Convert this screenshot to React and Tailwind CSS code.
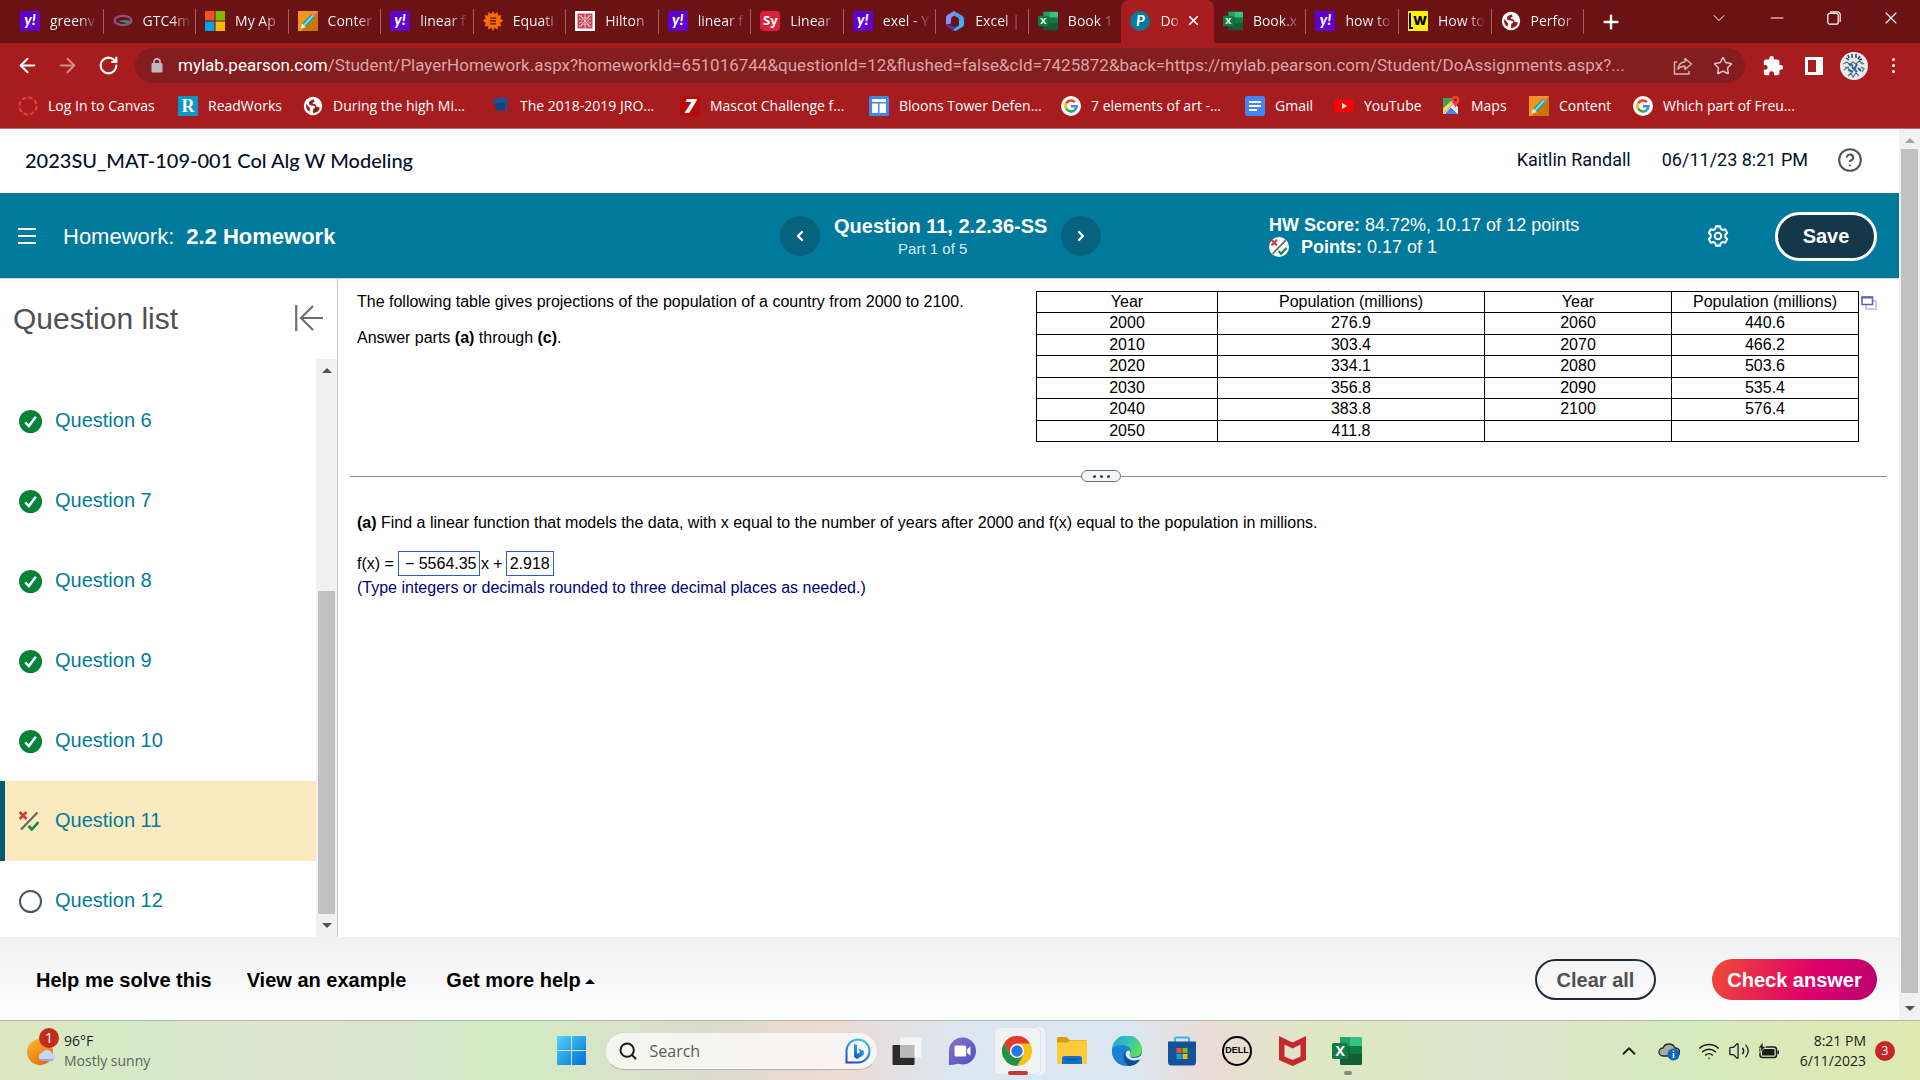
import {
  ArrowLeft,
  ArrowRight,
  ChevronDown,
  ChevronLeft,
  ChevronRight,
  ChevronUp,
  CircleHelp,
  Minus,
  Plus,
  RotateCw,
  Search,
  Star,
  Volume2,
  Wifi,
  X,
} from "lucide-react";
import clsx from "clsx";
import { useState } from "react";

const tabs = [
  { icon: "yahoo", title: "greenv" },
  { icon: "gtc", title: "GTC4m" },
  { icon: "microsoft", title: "My Ap" },
  { icon: "pencil", title: "Conter" },
  { icon: "yahoo", title: "linear f" },
  { icon: "sun", title: "Equati" },
  { icon: "hilton", title: "Hilton" },
  { icon: "yahoo", title: "linear f" },
  { icon: "symbolab", title: "Linear" },
  { icon: "yahoo", title: "exel - Y" },
  { icon: "m365", title: "Excel |" },
  { icon: "excel", title: "Book 1" },
  { icon: "pearson", title: "Do", active: true },
  { icon: "excel", title: "Book.x" },
  { icon: "yahoo", title: "how to" },
  { icon: "wise", title: "How to" },
  { icon: "globe", title: "Perfor" },
];

const bookmarks = [
  { icon: "canvas", title: "Log In to Canvas", width: "w-[160px]" },
  { icon: "readworks", title: "ReadWorks", width: "w-[125px]" },
  { icon: "globe", title: "During the high Mi...", width: "w-[187px]" },
  { icon: "cap", title: "The 2018-2019 JRO...", width: "w-[190px]" },
  { icon: "seven", title: "Mascot Challenge f...", width: "w-[189px]" },
  { icon: "sites", title: "Bloons Tower Defen...", width: "w-[192px]" },
  { icon: "google", title: "7 elements of art -...", width: "w-[184px]" },
  { icon: "docs", title: "Gmail", width: "w-[89px]" },
  { icon: "youtube", title: "YouTube", width: "w-[107px]" },
  { icon: "maps", title: "Maps", width: "w-[88px]" },
  { icon: "pencil", title: "Content", width: "w-[104px]" },
  { icon: "google", title: "Which part of Freu...", width: "w-[170px]" },
];

const questions = [
  { id: 6, status: "correct" },
  { id: 7, status: "correct" },
  { id: 8, status: "correct" },
  { id: 9, status: "correct" },
  { id: 10, status: "correct" },
  { id: 11, status: "partial" },
  { id: 12, status: "open" },
];

const rows = [
  ["2000", "276.9", "2060", "440.6"],
  ["2010", "303.4", "2070", "466.2"],
  ["2020", "334.1", "2080", "503.6"],
  ["2030", "356.8", "2090", "535.4"],
  ["2040", "383.8", "2100", "576.4"],
  ["2050", "411.8", "", ""],
];

export default function App() {
  return (
    <div className="flex h-screen flex-col overflow-hidden bg-white font-['Liberation_Sans',Arial,sans-serif] text-black">
      <Browser />
      <div className="flex min-h-0 flex-1">
        <div className="flex min-w-0 flex-1 flex-col">
          <CourseHeader />
          <HomeworkBar />
          <div className="flex min-h-0 flex-1">
            <QuestionList />
            <Exercise />
          </div>
          <Footer />
        </div>
        <Scrollbar muted thumb="mb-[27px] mt-5" />
      </div>
      <Taskbar />
    </div>
  );
}

function Browser() {
  return (
    <header className="shrink-0 border-b border-[#c56a6a] bg-[#a71d1f] font-['Open_Sans','Noto_Sans',sans-serif] text-white">
      <div className="flex h-[43px] bg-[#6b1214] pl-[11px]">
        <div className="flex w-[1573px] min-w-0">
          {tabs.map((tab, i) => (
            <Tab key={i} {...tab} divider={!tab.active && !tabs[i + 1]?.active} />
          ))}
        </div>
        <button aria-label="New tab" className="ml-4 mr-auto">
          <Plus className="h-[22px] w-[22px]" strokeWidth={2.6} />
        </button>
        <div className="flex items-start pt-2">
          <button aria-label="Search tabs" className="flex h-5 w-[58px] items-center justify-center">
            <ChevronDown className="h-5 w-5" strokeWidth={1.2} />
          </button>
          <button aria-label="Minimize" className="flex h-5 w-[57px] items-center justify-center">
            <Minus className="h-5 w-5" strokeWidth={1.4} />
          </button>
          <button aria-label="Restore" className="flex h-5 w-[57px] items-center justify-center">
            <svg viewBox="0 0 14 14" className="h-3.5 w-3.5" fill="none" stroke="currentColor" strokeWidth="1.2">
              <rect x="0.8" y="2.4" width="10.4" height="10.8" rx="2" />
              <path d="M3 .8h7.4a2.8 2.8 0 0 1 2.8 2.8V11" />
            </svg>
          </button>
          <button aria-label="Close" className="flex h-5 w-[58px] items-center justify-center">
            <X className="h-5 w-5" strokeWidth={1.3} />
          </button>
        </div>
      </div>

      <div className="flex h-[45px] items-center pl-4 pr-6">
        <button aria-label="Back" className="w-10">
          <ArrowLeft className="h-[23px] w-[23px]" strokeWidth={2.2} />
        </button>
        <button aria-label="Forward" className="w-10 text-[#d48e8f]">
          <ArrowRight className="h-[23px] w-[23px]" strokeWidth={2} />
        </button>
        <button aria-label="Reload" className="w-[39px] pl-0.5">
          <RotateCw className="h-[21px] w-[21px]" strokeWidth={2.4} />
        </button>
        <div className="flex h-[35px] min-w-0 flex-1 items-center rounded-full bg-[#841d1f] pl-4 pr-3">
          <svg viewBox="0 0 12 15" className="mr-[15px] h-[15px] w-3 shrink-0" fill="none">
            <rect x="0.5" y="5" width="11" height="9.6" rx="1.2" fill="#bfb9ba" />
            <path d="M3 6V3.8a3 3 0 0 1 6 0V6" stroke="#bfb9ba" strokeWidth="1.7" />
          </svg>
          <div className="min-w-0 flex-1 overflow-hidden whitespace-nowrap font-['Roboto',sans-serif] text-[17px] text-[#d9a5a6]">
            <span className="text-white">mylab.pearson.com</span>
            /Student/PlayerHomework.aspx?homeworkId=651016744&amp;questionId=12&amp;flushed=false&amp;cId=7425872&amp;back=https://mylab.pearson.com/Student/DoAssignments.aspx?...
          </div>
          <button aria-label="Share" className="ml-4">
            <svg viewBox="0 0 20 20" className="h-5 w-5" fill="none" stroke="#d3b5b5" strokeWidth="1.5" strokeLinejoin="round">
              <path d="M4 6H1.5v12H16v-3" />
              <path d="M12 2.5 18.5 8 12 13.5v-3.3c-3.500-.2-5.500.8-7 3 .3-4 2.500-7 7-7.500z" />
            </svg>
          </button>
          <button aria-label="Bookmark this page" className="ml-5">
            <Star className="h-5 w-5 text-[#dcc3c3]" strokeWidth={1.8} />
          </button>
        </div>
        <div className="flex items-center pl-[17px]">
          <button aria-label="Extensions" className="mr-[21px]">
            <svg viewBox="0 0 24 24" className="h-[22px] w-[22px]" fill="white">
              <path d="M20.500 11H19V7a2 2 0 0 0-2-2h-4V3.500a2.500 2.500 0 0 0-5 0V5H4a2 2 0 0 0-2 2v3.800h1.500a2.700 2.700 0 0 1 0 5.400H2V20a2 2 0 0 0 2 2h3.800v-1.500a2.700 2.700 0 0 1 5.400 0V22H17a2 2 0 0 0 2-2v-4h1.500a2.500 2.500 0 0 0 0-5z" />
            </svg>
          </button>
          <button aria-label="Side panel" className="mr-[17px] flex h-[18px] w-[18px] justify-end border-[3px] border-white">
            <span className="h-full w-1 bg-white" />
          </button>
          <button aria-label="Profile" className="mr-[22px]">
            <Avatar />
          </button>
          <button aria-label="Menu" className="flex w-1.5 flex-col items-center gap-[3px]">
            <span className="h-[3px] w-[3px] rounded-full bg-white" />
            <span className="h-[3px] w-[3px] rounded-full bg-white" />
            <span className="h-[3px] w-[3px] rounded-full bg-white" />
          </button>
        </div>
      </div>

      <nav className="flex h-10 items-center pb-1 pl-[18px]">
        {bookmarks.map((item, i) => (
          <a key={i} href="#" className={clsx("flex shrink-0 items-center gap-2.5 whitespace-nowrap text-sm", item.width)}>
            <SiteIcon name={item.icon} />
            {item.title}
          </a>
        ))}
      </nav>
    </header>
  );
}

function Tab({ icon, title, active, divider }) {
  return (
    <div
      className={clsx(
        "relative flex min-w-0 flex-1 items-center pb-0.5 pl-[9px]",
        active && "rounded-t-lg bg-[#a71d1f]",
      )}
    >
      <SiteIcon name={icon} />
      <button
        className={clsx(
          "ml-2.5 whitespace-nowrap bg-gradient-to-r from-white from-60% to-transparent bg-clip-text text-left text-sm text-transparent",
          active ? "w-5" : "w-12",
        )}
      >
        {title}
      </button>
      {active && (
        <button aria-label="Close tab" className="ml-1.5">
          <X className="h-[15px] w-[15px]" strokeWidth={2.8} />
        </button>
      )}
      {divider && <span className="absolute right-0 top-[9px] h-[25px] w-px bg-[#a06060]" />}
    </div>
  );
}

function Avatar() {
  return (
    <svg viewBox="0 0 28 28" className="h-7 w-7">
      <circle cx="14" cy="14" r="14" fill="#e8edef" />
      <path d="M8 3l1 3M12 2v4M16 2v4M20 4l-2 3M6 6l3 2M22 7l-3 1" stroke="#33424c" strokeWidth="1.500" />
      <path d="M3 12l4-2 3 3 3-3 3 2 3-3 5 3M4 18l4-3 1 4M21 15l3 2-2 3M8 24l3-3 2 4 3-4 3 3" fill="none" stroke="#5c7080" strokeWidth="1.200" />
      <path d="M9 12l4 2M12 15l5 5M17 12l-3 6M9 18l4 2M18 16l3 3" stroke="#2c5f9a" strokeWidth="2" />
      <path d="M20 10l3 2M5 15l2 1" stroke="#6d9a3b" strokeWidth="1.600" />
    </svg>
  );
}

function SiteIcon({ name }) {
  switch (name) {
    case "yahoo":
      return (
        <span className="flex h-5 w-5 shrink-0 items-center justify-center bg-[#5f01d1] pb-0.5 font-['Lato',sans-serif] text-[15px] font-black italic leading-none text-white">
          y!
        </span>
      );
    case "symbolab":
      return (
        <span className="flex h-5 w-5 shrink-0 items-center justify-center rounded-sm bg-[#db1f3d] text-[13px] font-bold leading-none text-white">
          Sy
        </span>
      );
    case "readworks":
      return (
        <span className="flex h-5 w-5 shrink-0 items-center justify-center bg-[#0e96c4] font-['Liberation_Serif',serif] text-lg font-bold leading-none text-white">
          R
        </span>
      );
    case "seven":
      return (
        <span className="flex h-5 w-5 shrink-0 items-center justify-center bg-[#b50a0e] text-xl font-black italic leading-none text-white">
          7
        </span>
      );
    case "wise":
      return (
        <span className="flex h-5 w-5 shrink-0 items-center justify-center bg-[#fff200] text-[13px] font-black leading-none text-black">
          <span className="h-4 w-1 border-b-2 border-l-2 border-black" />W
        </span>
      );
    case "pearson":
      return (
        <span className="flex h-5 w-5 shrink-0 items-center justify-center rounded-full bg-[#047a9c] font-['Lato',sans-serif] text-[15px] font-bold italic leading-none text-white">
          P
        </span>
      );
    case "microsoft":
      return (
        <svg viewBox="0 0 20 20" className="h-5 w-5 shrink-0">
          <path fill="#f25022" d="M0 0h9.500v9.500H0z" />
          <path fill="#7fba00" d="M10.500 0H20v9.500h-9.500z" />
          <path fill="#00a4ef" d="M0 10.500h9.500V20H0z" />
          <path fill="#ffb900" d="M10.500 10.500H20V20h-9.500z" />
        </svg>
      );
    case "pencil":
      return (
        <svg viewBox="0 0 20 20" className="h-5 w-5 shrink-0">
          <path fill="#f5941d" d="M0 0h20v20H0z" />
          <path fill="#c97605" d="M20 0v20H3z" />
          <path fill="#2fa39a" d="M4 12.500 13 3l4 3.600-9 9.600z" />
          <path fill="#8fe0d8" d="M5.500 13.500 14.500 4l1.200 1.100-9 9.700z" />
          <path fill="#f3e7c4" d="M4 12.500 2.500 17.500 8 16.200z" />
          <path fill="#e56aa0" d="m13 3 1.500-1.200L18.200 5 17 6.600z" />
        </svg>
      );
    case "gtc":
      return (
        <svg viewBox="0 0 20 20" className="h-5 w-5 shrink-0" fill="none">
          <ellipse cx="10" cy="9.500" rx="8.500" ry="4.600" stroke="#8d4a90" strokeWidth="2.400" />
          <path d="M6 10.500c3-2 8-2 12 0-1 3-5 4.500-9 3.500 3-.2 4-.8 4.500-1.800-3-.7-5-1-7.500-1.700z" fill="#3f8a52" />
        </svg>
      );
    case "sun":
      return (
        <svg viewBox="0 0 20 20" className="h-5 w-5 shrink-0">
          <path fill="#f96a0c" d="m10 0 1.700 3L14.500 1l.5 3.400 3.400-.2-.9 3.200L20 9.800 17.200 12l1.200 3.300-3.400-.1-.5 3.500-2.800-1.900L10 20l-1.700-3.200-2.800 1.900-.5-3.500-3.400.1L2.800 12 0 9.800l2.500-2.400-.9-3.200 3.400.2L5.500 1l2.800 2z" />
          <path d="M7 7.200h6M7 10h6M7 12.800h6" stroke="#5e1c0c" strokeWidth="1.300" />
        </svg>
      );
    case "hilton":
      return (
        <svg viewBox="0 0 20 20" className="h-5 w-5 shrink-0" fill="none">
          <path fill="#fff" d="M0 0h20v20H0z" />
          <path fill="#c8485a" d="M2.500 2.500h15v15h-15z" />
          <path d="m4 4 12 12M16 4 4 16M10 3v14M4 8c4 0 4 4 0 4M16 8c-4 0-4 4 0 4M6 4c0 4 8 4 8 0M6 16c0-4 8-4 8 0" stroke="#f4d6d9" strokeWidth=".8" />
        </svg>
      );
    case "m365":
      return (
        <svg viewBox="0 0 20 20" className="h-5 w-5 shrink-0">
          <path fill="#8f8cf0" d="M9 0 3 3.500C1.500 4.400 1 5.500 1 7v6.500l5-1V8c0-1 .4-1.700 1.300-2.200L12 3z" />
          <path fill="#4e9bf2" d="m9 0 7.500 4.200C18 5 19 6 19 8v4l-5 1V9c0-1.300-.5-2-1.500-2.600L8 4z" />
          <path fill="#5136ae" d="M1 13c0 1.500.7 2.500 2 3.200L9 20l3-1.500 1-4.500-3 1.500c-1 .5-2 .3-3-.4z" />
          <path fill="#3fb4e8" d="M19 10v3c0 1.500-.7 2.500-2 3.300L10.500 20 8 19l6-4.500V10z" />
        </svg>
      );
    case "excel":
      return <ExcelIcon className="h-5 w-5 text-[9px]" />;
    case "globe":
      return (
        <svg viewBox="0 0 20 20" className="h-5 w-5 shrink-0">
          <circle cx="10" cy="10" r="9.200" fill="#fff" />
          <path fill="#8f1b1d" d="M11 3.500c-3 .2-5 1.700-5 3.700 0 2.500 3.500 2 5.500 2.900 1.500.7.500 2.400-1.200 2.500L10 17c3.500 0 6.500-2.300 6.700-5.500l-3.200-.8c0-1.700-1.500-2.600-3.300-2.900C9 7.500 9.500 6 11.500 6z" />
          <path fill="#8f1b1d" d="m3 8 4 4.200-.4 3.600C4 14.500 2.700 11.500 3 8z" />
        </svg>
      );
    case "canvas":
      return (
        <svg viewBox="0 0 20 20" className="h-5 w-5 shrink-0">
          <circle cx="10" cy="10" r="8.600" fill="none" stroke="#ea3b2f" strokeWidth="2.200" strokeDasharray="4.700 2.050" />
        </svg>
      );
    case "cap":
      return (
        <svg viewBox="0 0 20 20" className="h-5 w-5 shrink-0">
          <path fill="#15549a" d="m1 4 13-3 5 3.500L7 8z" />
          <path fill="#0f4686" d="m5 8 10-2v6c-2 3-7 4-9 2z" />
          <path d="M16 5v12" stroke="#15549a" strokeWidth="2" />
        </svg>
      );
    case "sites":
      return (
        <svg viewBox="0 0 20 20" className="h-5 w-5 shrink-0">
          <rect width="20" height="20" rx="1.500" fill="#4285f4" />
          <path fill="#fff" d="M3 3h14v3H3zM3 7.500h6V17H3zM10.500 7.500H17V17h-6.500z" />
        </svg>
      );
    case "google":
      return (
        <svg viewBox="0 0 20 20" className="h-5 w-5 shrink-0" fill="none" strokeWidth="2.600">
          <circle cx="10" cy="10" r="10" fill="#fff" />
          <path d="M13.900 6.100A5.500 5.500 0 0 0 5.200 7.300" stroke="#ea4335" />
          <path d="M5.200 7.300a5.500 5.500 0 0 0 0 5.400" stroke="#fbbc05" />
          <path d="M5.200 12.700a5.500 5.500 0 0 0 8.300 1.500" stroke="#34a853" />
          <path d="M13.500 14.200A5.500 5.500 0 0 0 15.500 10.200H10" stroke="#4285f4" />
        </svg>
      );
    case "docs":
      return (
        <svg viewBox="0 0 20 20" className="h-5 w-5 shrink-0">
          <rect width="20" height="20" rx="2" fill="#4285f4" />
          <path d="M4 6h12M4 10h12M4 14h8" stroke="#fff" strokeWidth="2" />
        </svg>
      );
    case "youtube":
      return (
        <svg viewBox="0 0 20 20" className="h-5 w-5 shrink-0">
          <rect x="0.500" y="3.500" width="19" height="13" rx="3.500" fill="#f00" />
          <path fill="#fff" d="m8 7 5 3-5 3z" />
        </svg>
      );
    case "maps":
      return (
        <svg viewBox="0 0 20 20" className="h-5 w-5 shrink-0">
          <path fill="#34a853" d="M2 2h10L2 13z" />
          <path fill="#fbd75b" d="M2 12.500 12 3l2.500 2L2 18z" />
          <path fill="#e9ebee" d="M2 18 13 7l4 4v7z" />
          <path fill="#4285f4" d="m10 11 7 7H4z" />
          <path d="m10 10.500 7 7" stroke="#fff" strokeWidth="1.200" />
          <path fill="#ea4335" d="M14.500 0A4 4 0 0 0 10.500 4c0 3 3 4 4 8 1-4 4-5 4-8a4 4 0 0 0-4-4z" />
          <circle cx="14.500" cy="4" r="1.400" fill="#8e1b14" />
        </svg>
      );
    default:
      return null;
  }
}

function ExcelIcon({ className }) {
  return (
    <span className={clsx("grid shrink-0 place-items-center font-bold leading-none text-white", className)}>
      <svg viewBox="0 0 30 30" className="col-start-1 row-start-1 h-full w-full">
        <path fill="#21a366" d="M8 1h11v9H8z" />
        <path fill="#33c481" d="M18 1h10.500q1.500 0 1.500 1.500V10H18z" />
        <path fill="#107c41" d="M18 10h12v8H18z" />
        <path fill="#0e6e3a" d="M8 10h10v8H8z" />
        <path fill="#185c37" d="M8 18h22v9.500q0 1.500-1.500 1.500H9.500Q8 29 8 27.500z" />
        <rect y="7" width="16" height="16" rx="1.500" fill="#107c41" />
      </svg>
      <span className="col-start-1 row-start-1 w-[54%] justify-self-start text-center">X</span>
    </span>
  );
}

function CourseHeader() {
  return (
    <div className="flex h-16 shrink-0 items-center justify-between pb-0.5 pl-[25px] pr-9 text-[#05112a]">
      <h1 className="font-['Lato',sans-serif] text-xl font-medium">2023SU_MAT-109-001 Col Alg W Modeling</h1>
      <div className="flex items-center font-['Roboto',sans-serif] text-lg">
        <span className="mr-[31px]">Kaitlin Randall</span>
        <span className="mr-[29px]">06/11/23 8:21 PM</span>
        <button aria-label="Help">
          <CircleHelp className="h-[26px] w-[26px] text-[#4f5659]" strokeWidth={1.9} />
        </button>
      </div>
    </div>
  );
}

function HomeworkBar() {
  return (
    <div className="grid h-[86px] shrink-0 grid-cols-[780fr_489fr_438fr_192fr] items-center border-b border-[#c9d6de] bg-[#007a9c] pt-px text-white">
      <div className="flex items-center pl-[18px]">
        <button aria-label="Open menu" className="mr-[27px] flex w-[18px] flex-col gap-[5px]">
          <span className="h-0.5 bg-white" />
          <span className="h-0.5 bg-white" />
          <span className="h-0.5 bg-white" />
        </button>
        <h2 className="text-[22px]">
          Homework:<strong className="ml-3">2.2 Homework</strong>
        </h2>
      </div>
      <div className="flex items-center gap-3.5">
        <RoundButton label="Previous question" icon={ChevronLeft} />
        <div className="text-center">
          <p className="text-xl font-bold leading-6">Question 11, 2.2.36-SS</p>
          <p className="pr-4 text-[15px] leading-[21px] text-[#d9edf3]">Part 1 of 5</p>
        </div>
        <RoundButton label="Next question" icon={ChevronRight} />
      </div>
      <div className="text-lg leading-[22px]">
        <p>
          <strong>HW Score:</strong> 84.72%, 10.17 of 12 points
        </p>
        <p className="flex items-center">
          <span className="mr-3 flex h-5 w-5 items-center justify-center rounded-full bg-white">
            <PartialIcon className="h-4 w-4" />
          </span>
          <strong className="mr-[5px]">Points:</strong> 0.17 of 1
        </p>
      </div>
      <div className="flex items-center justify-between pr-[22px]">
        <button aria-label="Settings">
          <GearIcon />
        </button>
        <button className="h-[49px] w-[102px] rounded-full border-[3px] border-white bg-[#14374a] text-xl font-bold">
          Save
        </button>
      </div>
    </div>
  );
}

function RoundButton({ label, icon: Icon }) {
  return (
    <button aria-label={label} className="flex h-10 w-10 shrink-0 items-center justify-center rounded-full bg-[#07627f]">
      <Icon className="h-4 w-4" strokeWidth={3.4} />
    </button>
  );
}

function GearIcon() {
  return (
    <svg viewBox="0 0 24 24" className="h-6 w-[22px]" fill="none" stroke="white" strokeWidth="2.200" strokeLinejoin="round">
      <path d="M9.800 1.500h4.400l.8 2.800 1.900 1.100 2.900-.7 2.200 3.800-2 2.100v2.800l2 2.100-2.200 3.800-2.900-.7-1.900 1.100-.8 2.800H9.800L9 19.700l-1.900-1.100-2.900.7L2 15.500l2-2.100v-2.800L2 8.500l2.200-3.800 2.900.7L9 4.300z" />
      <circle cx="12" cy="12" r="3.600" />
    </svg>
  );
}

function PartialIcon({ className }) {
  return (
    <svg viewBox="0 0 20 20" className={className} fill="none">
      <path d="m.5 1 7 7M7.500 1l-7 7" stroke="#cf3b3b" strokeWidth="2.600" />
      <path d="M18.500 1.500 2 18.500" stroke="#6a6a62" strokeWidth="2.200" />
      <path d="m9.500 15 3.200 3.500L19.500 11" stroke="#128a3e" strokeWidth="2.600" />
    </svg>
  );
}

function StatusIcon({ status }) {
  if (status === "partial") {
    return <PartialIcon className="mr-[3px] h-5 w-5" />;
  }
  if (status === "open") {
    return <span className="h-[23px] w-[23px] rounded-full border-2 border-[#4a5566]" />;
  }
  return (
    <svg viewBox="0 0 24 24" className="h-[23px] w-[23px]">
      <circle cx="12" cy="12" r="12" fill="#038238" />
      <path d="m6.500 12.800 3.800 4L17.500 7" fill="none" stroke="#fff" strokeWidth="2.600" />
    </svg>
  );
}

function QuestionList() {
  const [current, setCurrent] = useState(11);

  return (
    <aside className="flex w-[338px] shrink-0 flex-col border-r border-[#c7c9d6]">
      <div className="flex h-20 shrink-0 items-center justify-between pb-0.5 pl-[13px] pr-3.5">
        <h2 className="text-[30px] text-[#4d5054]">Question list</h2>
        <button aria-label="Collapse question list">
          <svg viewBox="0 0 28 26" className="h-[26px] w-7" fill="none" stroke="#6a7070" strokeWidth="2.200">
            <path d="M1.200 0v26M28 13H6M18 1 6 13l12 12" />
          </svg>
        </button>
      </div>
      <div className="flex min-h-0 flex-1">
        <ul className="min-w-0 flex-1 overflow-hidden pt-[22px]">
          {questions.map(({ id, status }) => (
            <li key={id}>
              <button
                onClick={() => setCurrent(id)}
                className={clsx(
                  "flex h-20 w-full items-center gap-[13px] border-l-[5px] pl-3.5 text-xl text-[#047a9c]",
                  id === current ? "border-[#005a70] bg-[#f9ebbf]" : "border-transparent",
                )}
              >
                <StatusIcon status={status} />
                <span className="pb-0.5">Question {id}</span>
              </button>
            </li>
          ))}
        </ul>
        <Scrollbar thumb="mb-[23px] mt-[232px]" />
      </div>
    </aside>
  );
}

function Scrollbar({ muted, thumb }) {
  return (
    <div className="relative flex w-[21px] shrink-0 bg-[#f1f1f1] px-0.5">
      <span
        className={clsx(
          "absolute left-1.5 top-[9px] border-x-[5px] border-b-[5px] border-x-transparent",
          muted ? "border-b-[#a3a3a3]" : "border-b-[#505050]",
        )}
      />
      <div className={clsx("w-full bg-[#c1c1c1]", thumb)} />
      <span className="absolute bottom-[9px] left-1.5 border-x-[5px] border-t-[5px] border-x-transparent border-t-[#505050]" />
    </div>
  );
}

function Exercise() {
  const [slope, setSlope] = useState("− 5564.35");
  const [intercept, setIntercept] = useState("2.918");

  return (
    <main className="min-w-0 flex-1 px-3 text-base">
      <div className="flex items-start pl-[7px] pt-3">
        <div className="min-w-0 flex-1 pt-px">
          <p className="leading-5">The following table gives projections of the population of a country from 2000 to 2100.</p>
          <p className="mt-4 leading-5">
            Answer parts <strong>(a)</strong> through <strong>(c)</strong>.
          </p>
        </div>
        <table className="h-[151px] w-[823px] table-fixed border-collapse text-center leading-5">
          <thead>
            <tr>
              <th className="w-[181px] border border-black p-0 font-normal">Year</th>
              <th className="w-[267px] border border-black p-0 font-normal">Population (millions)</th>
              <th className="w-[187px] border border-black p-0 font-normal">Year</th>
              <th className="border border-black p-0 font-normal">Population (millions)</th>
            </tr>
          </thead>
          <tbody>
            {rows.map((row) => (
              <tr key={row[0]}>
                {row.map((cell, i) => (
                  <td key={i} className="border border-black p-0">
                    {cell}
                  </td>
                ))}
              </tr>
            ))}
          </tbody>
        </table>
        <button aria-label="Open table in a new window" className="ml-0.5 mr-2.5 mt-[5px]">
          <svg viewBox="0 0 16 14" className="h-3.5 w-4" fill="none">
            <rect x="5" y="5" width="10" height="8" fill="#fff" stroke="#b9bbe0" strokeWidth="1.500" />
            <rect x="1" y="1" width="10.500" height="7.500" fill="#fff" stroke="#5a62b4" strokeWidth="1.500" />
            <path d="M.5 1.500h11.500" stroke="#5a62b4" strokeWidth="2" />
          </svg>
        </button>
      </div>

      <div className="mt-7 flex items-center">
        <span className="h-px flex-[731] bg-[#868e9c]" />
        <button
          aria-label="Resize panels"
          className="flex h-3 w-10 items-center justify-center gap-1 rounded-md border border-[#6a7786] bg-[#f4f5f6]"
        >
          <span className="h-[3px] w-[3px] rounded-full bg-[#33404e]" />
          <span className="h-[3px] w-[3px] rounded-full bg-[#33404e]" />
          <span className="h-[3px] w-[3px] rounded-full bg-[#33404e]" />
        </button>
        <span className="h-px flex-[765] bg-[#868e9c]" />
      </div>

      <div className="pl-[7px] pt-[31px]">
        <p className="leading-5">
          <strong>(a)</strong> Find a linear function that models the data, with x equal to the number of years after 2000 and f(x) equal to the population in millions.
        </p>
        <div className="mt-[18px] flex items-center">
          <label htmlFor="slope">f(x) =</label>
          <input
            id="slope"
            value={slope}
            onChange={(event) => setSlope(event.target.value)}
            className="ml-1 h-[25px] w-[82px] border border-[#2b5fc4] pl-1.5"
          />
          <label htmlFor="intercept" className="px-px">
            x +
          </label>
          <input
            id="intercept"
            value={intercept}
            onChange={(event) => setIntercept(event.target.value)}
            className="ml-0.5 h-[25px] w-12 border border-[#2b5fc4] pl-[3px]"
          />
        </div>
        <p className="leading-6 text-[#00007f]">(Type integers or decimals rounded to three decimal places as needed.)</p>
      </div>
    </main>
  );
}

function Footer() {
  return (
    <footer className="flex h-[83px] shrink-0 items-center bg-gradient-to-b from-[#f0f0f0] to-white pl-9 pr-[22px] pt-0.5 text-xl font-bold">
      <button className="mr-[35px]">Help me solve this</button>
      <button className="mr-10">View an example</button>
      <button className="mr-auto flex items-center gap-1">
        Get more help
        <span className="mt-1 border-x-[5px] border-b-[5px] border-x-transparent border-b-black" />
      </button>
      <button className="mr-14 h-[41px] w-[121px] rounded-full border-2 border-[#1c2a3c] text-[#505050]">Clear all</button>
      <button className="h-[41px] w-[165px] rounded-full bg-[linear-gradient(110deg,#ee4b34_0%,#e0006c_60%,#b8006f_100%)] text-white">
        Check answer
      </button>
    </footer>
  );
}

function Taskbar() {
  return (
    <footer className="grid h-[60px] shrink-0 grid-cols-[1fr_auto_1fr] items-center border-t border-[#b4b9ae] bg-[linear-gradient(90deg,#dde6bf_0%,#d6eac6_5%,#dbe6d0_14%,#d8e5d0_20%,#d3ebc1_27%,#dcdccf_37%,#edd9d1_43%,#dbe7f1_50%,#dce6f0_59%,#eadcd6_63%,#dde8c2_69%,#dce5ce_78%,#d6ebbc_88%,#dfe8b1_100%)] pr-0.5 font-['Open_Sans','Noto_Sans',sans-serif] text-[#1c1c1c]">
      <button className="flex items-center pl-[27px] text-left">
        <span className="relative">
          <svg viewBox="0 0 32 42" className="h-[42px] w-8">
            <defs>
              <linearGradient id="sun" x1="0" y1="0" x2="0.600" y2="1">
                <stop offset="0" stopColor="#f7bd2e" />
                <stop offset="1" stopColor="#ef6c0e" />
              </linearGradient>
            </defs>
            <circle cx="13" cy="22" r="13" fill="url(#sun)" />
            <path d="M15 31a4.500 4.500 0 0 1 0-8.500 6 6 0 0 1 10.500 1.500 3.600 3.600 0 0 1-.5 7z" fill="#c3d6f7" />
            <path d="M12 29h15l-2 2H15z" fill="#8eafe6" />
          </svg>
          <span className="absolute -top-0.5 left-3 flex h-5 w-5 items-center justify-center rounded-full bg-[#c42b1c] text-sm leading-none text-white">
            1
          </span>
        </span>
        <span className="ml-[5px] text-sm leading-5">
          96°F
          <span className="block text-[#5d655a]">Mostly sunny</span>
        </span>
      </button>

      <div className="flex h-full items-center">
        <TaskButton label="Start">
          <svg viewBox="0 0 29 29" className="h-[29px] w-[29px]">
            <defs>
              <linearGradient id="win" x1="0" y1="0" x2="1" y2="1">
                <stop offset="0" stopColor="#50d3ff" />
                <stop offset="1" stopColor="#006fd4" />
              </linearGradient>
            </defs>
            <path d="M1 0h13v14H0V1q0-1 1-1zM15 0h13q1 0 1 1v13H15zM0 15h14v14H1q-1 0-1-1zM15 15h14v13q0 1-1 1H15z" fill="url(#win)" />
          </svg>
        </TaskButton>
        <div className="ml-1.5 mr-0.5 flex h-[38px] w-[273px] items-center rounded-full border border-b-[#b7b0aa] border-x-[#ddd8d2] border-t-[#ddd8d2] bg-white/70 pl-3 pr-1.5">
          <Search className="h-5 w-5 shrink-0" strokeWidth={2.4} />
          <input
            type="text"
            aria-label="Search"
            placeholder="Search"
            className="ml-3 min-w-0 flex-1 text-base placeholder:text-[#5a5a5a]"
          />
          <svg viewBox="0 0 26 26" className="h-[26px] w-[26px] shrink-0" fill="none">
            <defs>
              <linearGradient id="bing" x1="0.600" y1="0" x2="0.200" y2="1">
                <stop offset="0" stopColor="#2cc3ee" />
                <stop offset="1" stopColor="#174fc0" />
              </linearGradient>
            </defs>
            <path d="M1.500 24.500V13A11.500 11.500 0 1 1 13 24.500z" stroke="url(#bing)" strokeWidth="2" />
            <path d="M9 5.500 12 7v9l3-1.700-1.800-3.800 5.300 2q1.500 4-1.800 5.800L12 21l-3-2z" fill="url(#bing)" />
          </svg>
        </div>
        <TaskButton label="Task view">
          <svg viewBox="0 0 30 30" className="h-[30px] w-[30px]">
            <rect x="0.500" y="9" width="22" height="20" rx="1" fill="#2b2b2b" />
            <rect x="8" y="1.500" width="21.500" height="20" rx="1" fill="#f6f6f6" />
            <path d="M8 9h14.500v12.500H8z" fill="#b9b9b9" />
          </svg>
        </TaskButton>
        <TaskButton label="Chat">
          <svg viewBox="0 0 30 30" className="h-7 w-7">
            <defs>
              <linearGradient id="chat" x1="0" y1="0" x2="1" y2="1">
                <stop offset="0" stopColor="#8f6fc0" />
                <stop offset="1" stopColor="#4a50c8" />
              </linearGradient>
            </defs>
            <path d="M1 30V15A14.500 14.500 0 1 1 15.500 29.500l-5-.8Q6 30 1 30z" fill="url(#chat)" />
            <rect x="7" y="9" width="12.500" height="12" rx="1.800" fill="#fff" />
            <path d="m20.500 13 3.500-3v10l-3.500-3z" fill="#fff" />
          </svg>
        </TaskButton>
        <TaskButton label="Chrome" active>
          <svg viewBox="0 0 30 30" className="h-[30px] w-[30px]">
            <circle cx="15" cy="15" r="15" fill="#fbc116" />
            <path d="M15 7.500h13A15 15 0 0 0 2 7.500l6.500 11.250z" fill="#e33b2e" />
            <path d="M2 7.500A15 15 0 0 0 15 30l6.500-11.250H8.500z" fill="#1f9444" />
            <circle cx="15" cy="15" r="7.200" fill="#fff" />
            <circle cx="15" cy="15" r="5.700" fill="#2c74ea" />
          </svg>
        </TaskButton>
        <TaskButton label="File Explorer">
          <svg viewBox="0 0 30 27" className="h-[27px] w-[30px]">
            <path d="M0 1.500Q0 0 1.500 0h8l3 3H29q1 0 1 1v6H0z" fill="#dd9a06" />
            <path d="M0 5.500h10l3-2h17V26q0 1-1 1H1q-1 0-1-1z" fill="#fdca3b" />
            <path d="M5 27v-5.500Q5 19 7.500 19h15q2.500 0 2.500 2.500V27z" fill="#1173c7" />
            <path d="M9 22.800h12" stroke="#084b8a" strokeWidth="1.300" />
          </svg>
        </TaskButton>
        <TaskButton label="Edge">
          <svg viewBox="0 0 30 30" className="h-[30px] w-[30px]">
            <defs>
              <linearGradient id="edge" x1="0" y1="0.200" x2="1" y2="0.600">
                <stop offset="0" stopColor="#1fa5dc" />
                <stop offset="0.500" stopColor="#34c1bd" />
                <stop offset="1" stopColor="#62df52" />
              </linearGradient>
            </defs>
            <circle cx="15" cy="15" r="15" fill="#0f64ae" />
            <path d="M0 14A15 15 0 0 1 30 14c0 5-4 7-8 7-3.500 0-5-1.500-4-3 2-4-1-8-6.500-8.500C6 9 1.500 10.500 0 14z" fill="url(#edge)" />
            <path d="M0 15c1-4 5-6 10-5.500 5 .5 8 3 8.500 6-3-3-7-1-7 4.500 0 4 2.500 8 6.500 9.500C8 31 0 25 0 15z" fill="#1b82d3" />
            <path d="M12.500 17c0 4.500 4 8 9 8 2.500 0 4.500-.8 7-2-2.500 4.500-7 7-11.500 7-4-2-6.500-8-4.500-13z" fill="#0d4f97" />
            <path d="M18 18c-1 2 1 4 4 4 3 0 6-1 8-4v3c-.3.800-.8 1.500-1.500 2.200-5 2-12 1.800-14.500-3.200-1-3 .5-6 3-5.500 1.500.5 1.700 2 1 3.500z" fill="#e4ebf1" />
          </svg>
        </TaskButton>
        <TaskButton label="Microsoft Store">
          <svg viewBox="0 0 30 30" className="h-[30px] w-[30px]">
            <path d="M8 7V3q0-1.500 1.500-1.500h11Q22 1.500 22 3v4" fill="none" stroke="#30b9f2" strokeWidth="2" />
            <path d="M1 5.500h28V26q0 3.500-3.500 3.500h-21Q1 29.500 1 26z" fill="#12539a" />
            <path d="M9.500 12h5v5h-5z" fill="#f25022" />
            <path d="M15.500 12h5v5h-5z" fill="#7fba00" />
            <path d="M9.500 18h5v5h-5z" fill="#00a4ef" />
            <path d="M15.500 18h5v5h-5z" fill="#ffb900" />
          </svg>
        </TaskButton>
        <TaskButton label="Dell">
          <span className="flex h-[30px] w-[30px] items-center justify-center rounded-full border-2 border-black font-['Liberation_Sans',sans-serif] text-[9px] font-black text-black">
            DELL
          </span>
        </TaskButton>
        <TaskButton label="McAfee">
          <svg viewBox="0 0 27 30" className="h-[30px] w-[27px]">
            <path d="m0 0 13.500 6.500L27 0v24l-13.500 6L0 24zM5.500 8.500V20.500L13.500 24l8-3.500v-12l-8 4z" fill="#c5282d" fillRule="evenodd" />
          </svg>
        </TaskButton>
        <TaskButton label="Excel" running>
          <ExcelIcon className="h-[30px] w-[30px] text-sm" />
        </TaskButton>
      </div>

      <div className="flex items-center justify-end pr-[23px]">
        <button aria-label="Hidden icons" className="mr-[18px]">
          <ChevronUp className="h-[22px] w-[22px]" strokeWidth={2} />
        </button>
        <button aria-label="OneDrive" className="mr-[18px]">
          <svg viewBox="0 0 22 20" className="h-5 w-[22px]">
            <path d="M5 15a4 4 0 0 1 0-8 6.500 6.500 0 0 1 12 0 4 4 0 0 1 1 8z" fill="#a9aaa5" stroke="#2a2a2a" strokeWidth="1.400" />
            <circle cx="15.500" cy="13.500" r="6" fill="#0a66c2" />
            <path d="M15.500 12v5M15.500 9.500v1.500" stroke="#fff" strokeWidth="1.600" />
          </svg>
        </button>
        <button aria-label="Network, volume and battery" className="mr-5 flex items-center gap-2">
          <Wifi className="h-[22px] w-[22px]" strokeWidth={1.7} />
          <Volume2 className="h-[22px] w-[22px]" strokeWidth={1.4} />
          <svg viewBox="0 0 22 18" className="h-[18px] w-[22px]">
            <rect x="2" y="5" width="16.500" height="10.500" rx="2.500" fill="none" stroke="#1c1c1c" strokeWidth="1.500" />
            <rect x="4" y="7" width="12.500" height="6.500" fill="#1c1c1c" />
            <path d="M19.500 8.500h1.500v3.500h-1.500z" fill="#1c1c1c" />
            <path d="m5 0-5 6h3L1.500 11 8 4.500H5z" fill="#1c1c1c" stroke="#d9ebbf" strokeWidth=".8" />
          </svg>
        </button>
        <button className="text-right text-sm leading-5">
          8:21 PM
          <span className="block">6/11/2023</span>
        </button>
        <span className="ml-[9px] flex h-5 w-5 items-center justify-center rounded-full bg-[#c1272d] text-xs text-white">3</span>
      </div>
    </footer>
  );
}

function TaskButton({ label, active, running, children }) {
  return (
    <button aria-label={label} className="relative flex h-12 w-[55px] items-center justify-center">
      {active && (
        <>
          <span className="absolute inset-y-0 left-2 right-0 rounded-md border border-white/50 bg-white/40" />
          <span className="absolute inset-y-0 left-1 right-1 rounded-md border border-[#dfe3e6] bg-[#f0f3f6]" />
          <span className="absolute bottom-0 left-[18px] h-1 w-5 rounded-full bg-[#d13438]" />
        </>
      )}
      {running && <span className="absolute bottom-0 left-6 h-1 w-2 rounded-full bg-[#858a78]" />}
      <span className="relative">{children}</span>
    </button>
  );
}
